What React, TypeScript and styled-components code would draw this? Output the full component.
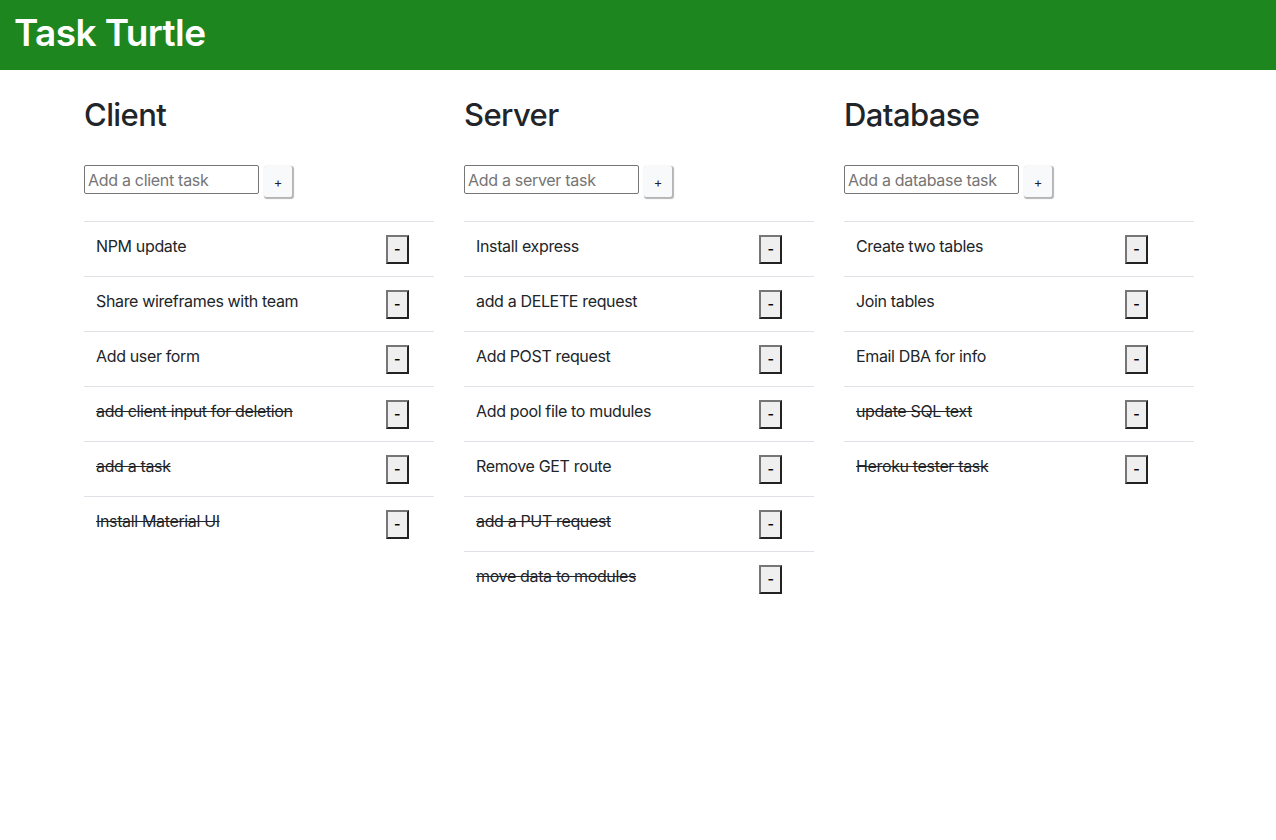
import { useState } from "react";
import styled, { createGlobalStyle } from "styled-components";

const GlobalStyle = createGlobalStyle`
  body {
    margin: 0;
    font-family: Inter, "Noto Sans", "Liberation Sans", sans-serif;
    font-size: 16px;
    line-height: 1.5;
    color: #212529;
    background: #fff;
  }
  * { box-sizing: border-box; }
`;

const Header = styled.header`
  height: 70px;
  background-color: #1e861e;
  display: flex;
  align-items: center;
  padding-left: 14px;
`;

const Title = styled.h1`
  margin: 0 0 4px;
  font-size: 37px;
  font-weight: 600;
  line-height: 1.2;
  color: #fff;
  letter-spacing: -0.6px;
`;

const Board = styled.main`
  display: grid;
  grid-template-columns: repeat(3, 350px);
  column-gap: 30px;
  padding: 26px 0 0 84px;
`;

const Column = styled.section``;

const ColumnTitle = styled.h2`
  margin: 0 0 32px;
  font-size: 31px;
  font-weight: 500;
  line-height: 1.2;
  letter-spacing: -0.6px;
`;

const AddForm = styled.form`
  display: flex;
  align-items: flex-start;
  gap: 5px;
  margin-bottom: 24px;
`;

const TaskInput = styled.input`
  width: 175px;
  height: 29px;
  padding: 1px 3px;
  font-family: inherit;
  font-size: 16px;
  letter-spacing: -0.3px;
  color: #212529;
  border: 1px solid #767676;
  border-radius: 2px;
  &::placeholder {
    color: #757575;
  }
`;

const AddButton = styled.button`
  width: 28px;
  height: 31px;
  margin-top: 1px;
  padding: 0;
  font-family: inherit;
  font-size: 13px;
  color: #212529;
  background: #f8f9fa;
  border: none;
  border-radius: 2px;
  box-shadow: 1px 1px 1px 1px #b5b5b5;
`;

const Table = styled.table`
  width: 100%;
  border-collapse: collapse;
`;

const Row = styled.tr`
  border-top: 1px solid #dee2e6;
`;

const Cell = styled.td<{ $done?: boolean }>`
  padding: 12px;
  vertical-align: top;
  font-size: 16px;
  line-height: 1.5;
  letter-spacing: -0.35px;
  text-decoration: ${(p) => (p.$done ? "line-through" : "none")};
`;

const RemoveButton = styled.button`
  width: 23px;
  height: 29px;
  margin-top: 1px;
  padding: 0 0 2px;
  font-family: inherit;
  font-size: 14px;
  font-weight: 600;
  color: #000;
  background: #efefef;
  border-width: 2px;
  border-style: solid;
  border-color: #767676 #222 #222 #767676;
  border-radius: 0;
`;

interface ITask {
  name: string;
  done: boolean;
}

interface IColumn {
  title: string;
  placeholder: string;
  tasks: ITask[];
}

const columns: IColumn[] = [
  {
    title: "Client",
    placeholder: "Add a client task",
    tasks: [
      { name: "NPM update", done: false },
      { name: "Share wireframes with team", done: false },
      { name: "Add user form", done: false },
      { name: "add client input for deletion", done: true },
      { name: "add a task", done: true },
      { name: "Install Material UI", done: true },
    ],
  },
  {
    title: "Server",
    placeholder: "Add a server task",
    tasks: [
      { name: "Install express", done: false },
      { name: "add a DELETE request", done: false },
      { name: "Add POST request", done: false },
      { name: "Add pool file to mudules", done: false },
      { name: "Remove GET route", done: false },
      { name: "add a PUT request", done: true },
      { name: "move data to modules", done: true },
    ],
  },
  {
    title: "Database",
    placeholder: "Add a database task",
    tasks: [
      { name: "Create two tables", done: false },
      { name: "Join tables", done: false },
      { name: "Email DBA for info", done: false },
      { name: "update SQL text", done: true },
      { name: "Heroku tester task", done: true },
    ],
  },
];

function TaskColumn({ column }: { column: IColumn }) {
  const [text, setText] = useState("");
  return (
    <Column>
      <ColumnTitle>{column.title}</ColumnTitle>
      <AddForm onSubmit={(e) => e.preventDefault()}>
        <TaskInput
          placeholder={column.placeholder}
          value={text}
          onChange={(e) => setText(e.target.value)}
        />
        <AddButton type="submit">+</AddButton>
      </AddForm>
      <Table>
        <tbody>
          {column.tasks.map((task) => (
            <Row key={task.name}>
              <Cell $done={task.done}>{task.name}</Cell>
              <Cell>
                <RemoveButton>-</RemoveButton>
              </Cell>
            </Row>
          ))}
        </tbody>
      </Table>
    </Column>
  );
}

export default function App() {
  return (
    <>
      <GlobalStyle />
      <Header>
        <Title>Task Turtle</Title>
      </Header>
      <Board>
        {columns.map((c) => (
          <TaskColumn key={c.title} column={c} />
        ))}
      </Board>
    </>
  );
}
